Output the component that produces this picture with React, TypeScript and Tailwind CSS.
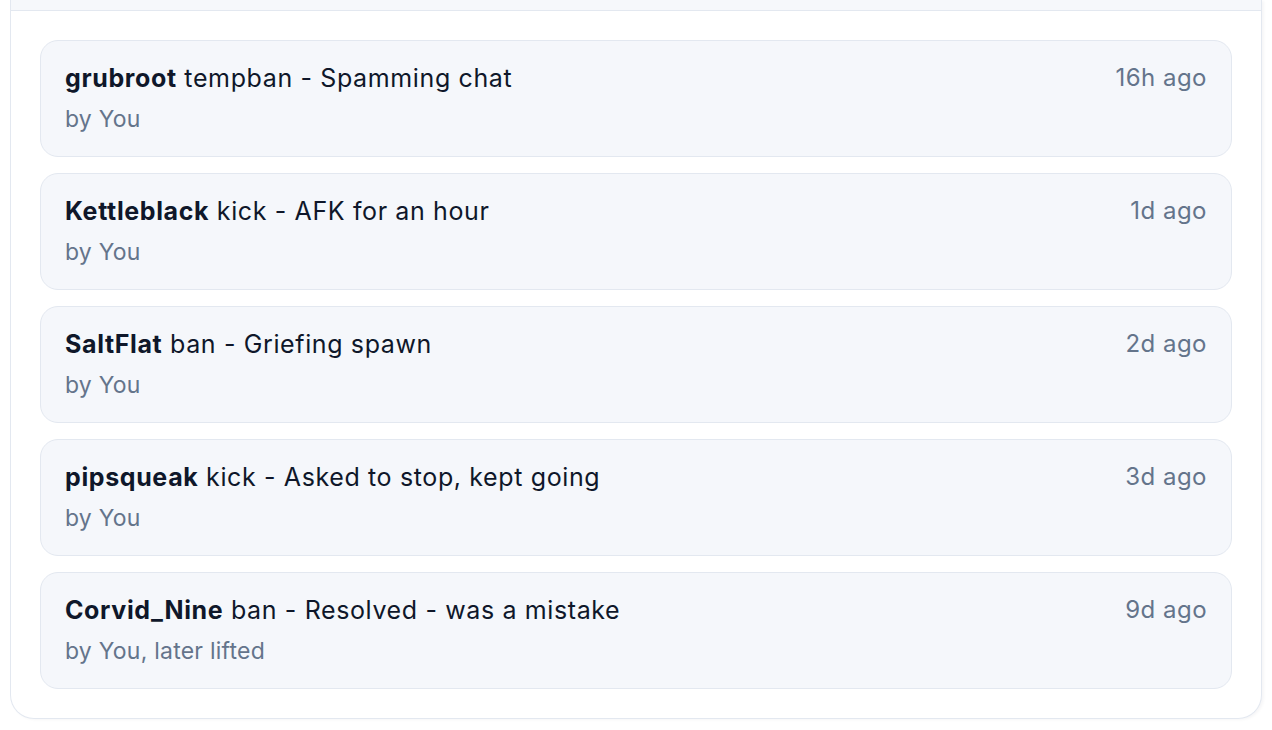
import * as React from "react";

const entries = [
  { player: "grubroot", action: "tempban", reason: "Spamming chat", by: "by You", when: "16h ago" },
  { player: "Kettleblack", action: "kick", reason: "AFK for an hour", by: "by You", when: "1d ago" },
  { player: "SaltFlat", action: "ban", reason: "Griefing spawn", by: "by You", when: "2d ago" },
  { player: "pipsqueak", action: "kick", reason: "Asked to stop, kept going", by: "by You", when: "3d ago" },
  { player: "Corvid_Nine", action: "ban", reason: "Resolved - was a mistake", by: "by You, later lifted", when: "9d ago" },
];

export default function App() {
  return (
    <div className="min-h-screen bg-white px-[10px] pb-[10px] font-['Inter',sans-serif]">
      <div className="rounded-b-[24px] border-x border-b border-[#e3e8f0] bg-white shadow-[2px_1px_3px_rgba(15,23,42,0.04)]">
        <div className="h-[11px] border-b border-[#e3e8f0] bg-[#f6f8fb]" />
        <ul className="flex flex-col gap-4 px-[29px] pb-[29px] pt-[29px]">
          {entries.map(({ player, action, reason, by, when }) => (
            <li
              key={player}
              className="flex items-start justify-between rounded-[18px] border border-[#e3e8f0] bg-[#f5f7fb] px-6 pb-[21px] pt-[19px]"
            >
              <div>
                <div className="text-[25px] leading-[36px] tracking-[0.025em] text-[#0f172a]">
                  <span className="font-bold">{player}</span> {action} - {reason}
                </div>
                <div className="mt-[7px] text-[23px] leading-[32px] tracking-[0.01em] text-[#64748b]">{by}</div>
              </div>
              <div className="text-[24px] leading-[36px] tracking-[0.02em] text-[#64748b]">{when}</div>
            </li>
          ))}
        </ul>
      </div>
    </div>
  );
}
